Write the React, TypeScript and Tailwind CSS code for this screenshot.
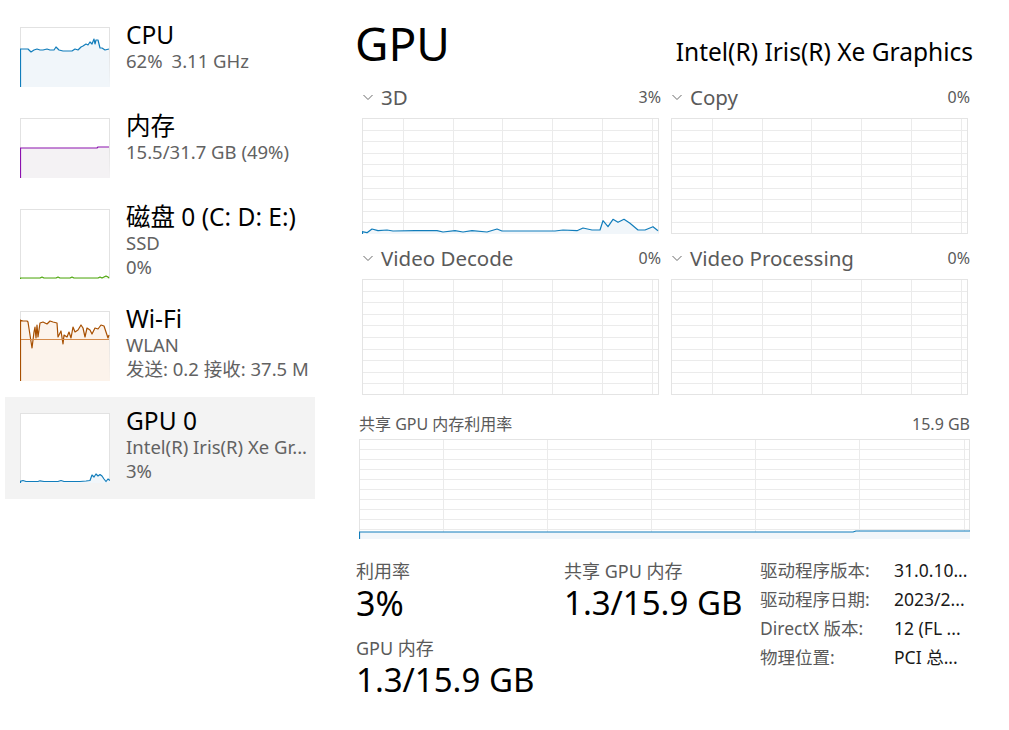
import React from "react";

type Pt = [number, number];

const BLUE = "#117dbb";
const BLUE_FILL = "#f1f6fa";

const cpuPts: Pt[] = [
  [0, 22], [8, 22], [11, 25], [14, 23], [17, 22], [20, 23], [23, 23], [27, 22], [30, 23], [34, 23],
  [36, 20], [39, 23], [43, 24], [47, 24], [52, 24], [55, 22], [58, 23], [61, 20], [63, 19], [66, 17],
  [68, 18], [70, 15], [72, 17], [74, 12], [75, 17], [76, 13], [78, 13], [80, 21], [82, 21], [85, 23], [89, 22],
];
const memPts: Pt[] = [[0, 30], [77, 30], [78, 29], [89, 29]];
const diskPts: Pt[] = [
  [0, 69], [20, 69], [22, 68], [24, 69], [36, 69], [38, 68], [40, 69], [50, 69], [52, 68], [54, 69],
  [78, 69], [80, 68], [82, 69], [84, 68], [86, 67], [88, 68], [89, 69],
];
const wifiPts: Pt[] = [
  [0, 9], [3, 10], [7, 10], [8, 11], [12, 37], [14, 21], [15, 16], [16, 27], [17, 14], [18, 26], [20, 12],
  [23, 11], [27, 13], [30, 10], [33, 11], [37, 12], [38, 26], [41, 20], [43, 33], [44, 24], [47, 26], [49, 21],
  [51, 27], [53, 16], [55, 21], [58, 19], [61, 14], [63, 17], [65, 26], [67, 17], [70, 19], [72, 23], [75, 17],
  [78, 18], [81, 14], [84, 15], [88, 27], [89, 24],
];
const gpuPts: Pt[] = [
  [0, 68.5], [3, 67.5], [6, 68.5], [18, 68.5], [20, 67.8], [24, 68.5], [38, 68.5], [41, 67.5], [44, 68.5],
  [60, 68.5], [66, 68], [70, 67.5], [72, 62], [74, 64], [76, 61], [78, 63], [80, 61.5], [82, 63], [84, 66],
  [86, 68.5], [88, 66], [90, 67.5],
];
const d3Pts: Pt[] = [
  [0, 113.7], [5, 114.7], [10, 111], [16, 112.7], [25, 112], [31, 113], [53, 112.7], [75, 112.7], [81, 114],
  [93, 112.7], [101, 114], [110, 112.7], [125, 114], [135, 111], [140, 113], [193, 113], [201, 112],
  [215, 112.7], [221, 110], [230, 112], [238, 112], [241, 102.7], [246, 108.7], [251, 101.3], [256, 104.3],
  [262, 101.3], [268, 105.3], [276, 112], [283, 112], [291, 108.7], [296, 112.7],
];
const sharedPts: Pt[] = [[0, 93], [494, 93], [497, 92], [611, 92]];

const toStr = (pts: Pt[]) => pts.map(([x, y]) => `${x},${y}`).join(" ");

function Plot({
  w,
  h,
  pts,
  stroke,
  fill,
}: {
  w: number;
  h: number;
  pts: Pt[];
  stroke: string;
  fill: string;
}) {
  const line: Pt[] = [[0.5, h], [0.5, pts[0][1]], ...pts];
  const area: Pt[] = [[0, h], ...pts, [w, h]];
  return (
    <>
      <polygon points={toStr(area)} fill={fill} />
      <polyline points={toStr(line)} fill="none" stroke={stroke} strokeWidth={1.2} strokeLinejoin="round" />
    </>
  );
}

function Thumb({
  h,
  pts,
  stroke,
  fill,
  mid,
}: {
  h: number;
  pts: Pt[];
  stroke: string;
  fill: string;
  mid?: number;
}) {
  const w = 90;
  return (
    <svg width={w} height={h} className="block shrink-0">
      <rect x={0.5} y={0.5} width={w - 1} height={h - 1} fill="white" stroke="#e2e2e2" />
      <Plot w={w} h={h} pts={pts} stroke={stroke} fill={fill} />
      {mid !== undefined && (
        <line x1={1} x2={w - 1} y1={mid + 0.5} y2={mid + 0.5} stroke="#d48a4a" strokeWidth={1} />
      )}
    </svg>
  );
}

function Chart({ w, h, vx, pts }: { w: number; h: number; vx: number[]; pts?: Pt[] }) {
  const hy = Array.from({ length: 9 }, (_, i) => Math.round((h * (i + 1)) / 10) + 0.5);
  return (
    <svg width={w} height={h} className="block" shapeRendering="crispEdges">
      <rect x={0.5} y={0.5} width={w - 1} height={h - 1} fill="white" stroke="#e4e4e4" />
      {hy.map((y) => (
        <line key={"h" + y} x1={1} x2={w - 1} y1={y} y2={y} stroke="#ebebeb" />
      ))}
      {vx.map((x) => (
        <line key={"v" + x} x1={x + 0.5} x2={x + 0.5} y1={1} y2={h - 1} stroke="#ebebeb" />
      ))}
      {pts && (
        <g shapeRendering="auto">
          <Plot w={w} h={h} pts={pts} stroke={BLUE} fill={BLUE_FILL} />
        </g>
      )}
    </svg>
  );
}

function Chevron() {
  return (
    <svg width="12" height="12" viewBox="0 0 12 12" className="shrink-0">
      <path d="M1.5 4 L6 8.5 L10.5 4" fill="none" stroke="#6b6b6b" strokeWidth="1" />
    </svg>
  );
}

function SideItem({
  title,
  lines,
  thumb,
  tall,
  selected,
}: {
  title: string;
  lines: React.ReactNode[];
  thumb: React.ReactNode;
  tall?: boolean;
  selected?: boolean;
}) {
  return (
    <div
      className={`flex items-start pl-[15px] pt-4 ${tall ? "h-[102px]" : "h-[91px]"} ${
        selected ? "bg-[#f3f3f3]" : ""
      }`}
    >
      {thumb}
      <div className="ml-[16px] -mt-[6px] min-w-0">
        <div className="text-[24.5px] leading-[28px] text-black whitespace-nowrap">{title}</div>
        {lines.map((l, i) => (
          <div key={i} className="text-[18.5px] leading-[24px] text-[#626262] whitespace-nowrap">
            {l}
          </div>
        ))}
      </div>
    </div>
  );
}

const smallV = [41, 91, 140, 190, 240, 290];

function Engine({ name, pct, pts }: { name: string; pct: string; pts?: Pt[] }) {
  return (
    <div>
      <div className="flex h-[24px] items-center justify-between">
        <div className="flex items-center">
          <Chevron />
          <span className="ml-[7px] text-[20.5px] text-[#5a5a5a]">{name}</span>
        </div>
        <span className="text-[16px] text-[#5a5a5a]">{pct}</span>
      </div>
      <div className="mt-[9px]">
        <Chart w={297} h={116} vx={smallV} pts={pts} />
      </div>
    </div>
  );
}

function Detail({ label, value }: { label: string; value: string }) {
  return (
    <div className="flex h-[29px] items-center text-[17.5px]">
      <span className="w-[134px] text-[#5a5a5a]">{label}</span>
      <span className="text-[#1a1a1a] whitespace-nowrap">{value}</span>
    </div>
  );
}

export default function App() {
  return (
    <div className="flex h-[730px] w-[1009px] overflow-hidden bg-white font-['Noto_Sans','Noto_Sans_CJK_SC',sans-serif]">
      {/* sidebar */}
      <div className="w-[315px] shrink-0 pl-[5px] pt-[11px]">
        <SideItem
          title="CPU"
          lines={[
            <>
              62%<span className="ml-[9px]">3.11 GHz</span>
            </>,
          ]}
          thumb={<Thumb h={60} pts={cpuPts} stroke={BLUE} fill={BLUE_FILL} />}
        />
        <SideItem
          title="内存"
          lines={["15.5/31.7 GB (49%)"]}
          thumb={<Thumb h={60} pts={memPts} stroke="#8b12ae" fill="#f4f2f4" />}
        />
        <SideItem
          tall
          title="磁盘 0 (C: D: E:)"
          lines={["SSD", "0%"]}
          thumb={<Thumb h={70} pts={diskPts} stroke="#4da60c" fill="#f3f8ef" />}
        />
        <SideItem
          tall
          title="Wi-Fi"
          lines={["WLAN", "发送: 0.2 接收: 37.5 M"]}
          thumb={<Thumb h={70} pts={wifiPts} stroke="#a74f01" fill="#fcf3eb" mid={28} />}
        />
        <SideItem
          tall
          selected
          title="GPU 0"
          lines={["Intel(R) Iris(R) Xe Gr...", "3%"]}
          thumb={<Thumb h={70} pts={gpuPts} stroke={BLUE} fill={BLUE_FILL} />}
        />
      </div>

      {/* main */}
      <div className="flex-1 pl-[40px] pr-[36px] pt-[15px]">
        <div className="flex items-baseline justify-between">
          <span className="text-[46px] leading-[56px] text-black">GPU</span>
          <span className="text-[24.5px] text-black">Intel(R) Iris(R) Xe Graphics</span>
        </div>

        <div className="mt-[14px] grid grid-cols-2 gap-x-[10px] gap-y-[12px] pl-[7px] pr-[3px]">
          <Engine name="3D" pct="3%" pts={d3Pts} />
          <Engine name="Copy" pct="0%" />
          <Engine name="Video Decode" pct="0%" />
          <Engine name="Video Processing" pct="0%" />
        </div>

        <div className="mt-[19px] pl-[4px] pr-[3px]">
          <div className="flex h-[20px] items-center justify-between text-[16px] text-[#5a5a5a]">
            <span>共享 GPU 内存利用率</span>
            <span>15.9 GB</span>
          </div>
          <div className="mt-[5px]">
            <Chart w={611} h={100} vx={[84, 188, 292, 396, 500, 605]} pts={sharedPts} />
          </div>
        </div>

        <div className="mt-[20px] flex pl-[1px]">
          <div className="w-[208px]">
            <div className="text-[18px] leading-[24px] text-[#5a5a5a]">利用率</div>
            <div className="text-[34px] leading-[40px] text-black">3%</div>
            <div className="mt-[13px] text-[18px] leading-[24px] text-[#5a5a5a]">GPU 内存</div>
            <div className="text-[33px] leading-[40px] text-black whitespace-nowrap">1.3/15.9 GB</div>
          </div>
          <div className="w-[196px]">
            <div className="text-[18px] leading-[24px] text-[#5a5a5a]">共享 GPU 内存</div>
            <div className="text-[33px] leading-[40px] text-black whitespace-nowrap">1.3/15.9 GB</div>
          </div>
          <div className="-mt-[3px]">
            <Detail label="驱动程序版本:" value="31.0.10..." />
            <Detail label="驱动程序日期:" value="2023/2..." />
            <Detail label="DirectX 版本:" value="12 (FL ..." />
            <Detail label="物理位置:" value="PCI 总..." />
          </div>
        </div>
      </div>
    </div>
  );
}
